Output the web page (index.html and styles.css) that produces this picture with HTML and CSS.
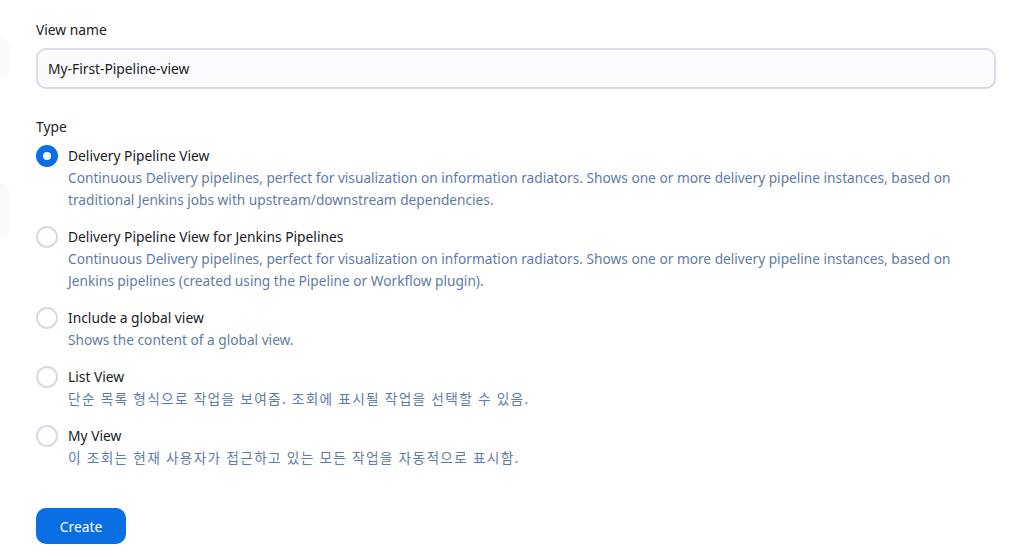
FILE: index.html
```html
<!DOCTYPE html>
<html lang="en">
<head>
<meta charset="utf-8">
<title>New view</title>
<link rel="stylesheet" href="styles.css">
</head>
<body>
<div class="layout">
  <aside class="side">
    <div class="side-block side-block--a"></div>
    <div class="side-block side-block--b"></div>
  </aside>
  <main class="main">
    <form class="form">
      <label class="field-label" for="name">View name</label>
      <input class="text-input" id="name" type="text" value="My-First-Pipeline-view">

      <div class="field-label type-label">Type</div>
      <div class="options">
        <label class="option">
          <span class="radio radio--checked"></span>
          <span class="option-body">
            <span class="option-title">Delivery Pipeline View</span>
            <span class="option-desc">Continuous Delivery pipelines, perfect for visualization on information radiators. Shows one or more delivery pipeline instances, based on traditional Jenkins jobs with upstream/downstream dependencies.</span>
          </span>
        </label>
        <label class="option">
          <span class="radio"></span>
          <span class="option-body">
            <span class="option-title">Delivery Pipeline View for Jenkins Pipelines</span>
            <span class="option-desc">Continuous Delivery pipelines, perfect for visualization on information radiators. Shows one or more delivery pipeline instances, based on Jenkins pipelines (created using the Pipeline or Workflow plugin).</span>
          </span>
        </label>
        <label class="option">
          <span class="radio"></span>
          <span class="option-body">
            <span class="option-title">Include a global view</span>
            <span class="option-desc">Shows the content of a global view.</span>
          </span>
        </label>
        <label class="option">
          <span class="radio"></span>
          <span class="option-body">
            <span class="option-title">List View</span>
            <span class="option-desc option-desc--ko" lang="ko">단순 목록 형식으로 작업을 보여줌. 조회에 표시될 작업을 선택할 수 있음.</span>
          </span>
        </label>
        <label class="option">
          <span class="radio"></span>
          <span class="option-body">
            <span class="option-title">My View</span>
            <span class="option-desc option-desc--ko" lang="ko">이 조회는 현재 사용자가 접근하고 있는 모든 작업을 자동적으로 표시함.</span>
          </span>
        </label>
      </div>
      <button class="btn" type="button">Create</button>
    </form>
  </main>
</div>
</body>
</html>
```

FILE: styles.css
```css
* { box-sizing: border-box; }

html, body {
  margin: 0;
  padding: 0;
  background: #ffffff;
}

body {
  font-family: "Noto Sans", "Noto Sans CJK KR", sans-serif;
  font-size: 13.8px;
  color: #202024;
}

.layout {
  display: flex;
  width: 1024px;
  height: 557px;
  overflow: hidden;
}

.side {
  width: 10px;
  flex: none;
  display: flex;
  flex-direction: column;
}

.side-block {
  background: #fafafb;
  border-radius: 0 10px 10px 0;
  width: 10px;
}

.side-block--a { margin-top: 37px; height: 40px; }
.side-block--b { margin-top: 106px; height: 54px; }

.main {
  flex: 1;
  padding: 19px 28px 0 26px;
}

.form {
  display: flex;
  flex-direction: column;
  align-items: stretch;
}

.field-label {
  display: block;
  line-height: 22px;
  font-size: 13.8px;
  color: #202024;
}

.text-input {
  margin-top: 7px;
  height: 41px;
  width: 100%;
  border: 2px solid #d7dce8;
  border-radius: 10px;
  background: #fbfbfd;
  padding: 0 10px;
  font-family: inherit;
  font-size: 13.8px;
  color: #202024;
  outline: none;
}

.type-label {
  margin-top: 27px;
}

.options {
  margin-top: 7px;
  display: flex;
  flex-direction: column;
  gap: 15px;
}

.option {
  display: flex;
  align-items: flex-start;
  gap: 10px;
  cursor: pointer;
}

.radio {
  flex: none;
  width: 22px;
  height: 22px;
  border-radius: 50%;
  border: 2px solid #d5dbe6;
  background: #ffffff;
}

.radio--checked {
  border: 7px solid #0b6fe4;
  background: #ffffff;
}

.option-body {
  display: flex;
  flex-direction: column;
}

.option-title {
  line-height: 22px;
  font-size: 13.8px;
  color: #202024;
}

.option-desc {
  line-height: 22px;
  font-size: 13.7px;
  color: #5f7ca6;
}

.option-desc--ko {
  letter-spacing: 1.3px;
}

.btn {
  margin-top: 39px;
  align-self: flex-start;
  width: 90px;
  height: 36px;
  border: none;
  border-radius: 10px;
  background: #0b6fe4;
  color: #ffffff;
  font-family: inherit;
  font-size: 13.8px;
}
```
